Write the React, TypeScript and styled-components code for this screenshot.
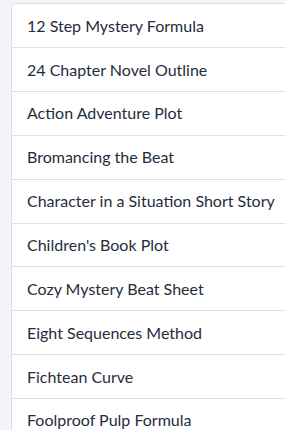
import React from "react";
import styled, { createGlobalStyle } from "styled-components";

const Global = createGlobalStyle`
  html, body { margin: 0; padding: 0; background: #f3f5f8; overflow: hidden; }
  body { font-family: Lato, "Open Sans", sans-serif; }
`;

const Page = styled.div`
  padding: 3px 0 0 11px;
  width: 285px;
  height: 430px;
  box-sizing: border-box;
  overflow: hidden;
`;

const List = styled.ul`
  list-style: none;
  margin: 0;
  padding: 0;
  width: 300px;
  background: #fff;
  border: 1px solid #dcdfe3;
  border-radius: 4px;
`;

const Item = styled.li`
  height: 43.86px;
  box-sizing: border-box;
  display: flex;
  align-items: center;
  padding: 0 15px 1px;
  font-size: 16px;
  color: #1f2d3d;
  border-top: 1px solid #dcdfe3;
  white-space: nowrap;
  &:first-child { border-top: none; height: 43.2px; }
`;

const items = [
  "12 Step Mystery Formula",
  "24 Chapter Novel Outline",
  "Action Adventure Plot",
  "Bromancing the Beat",
  "Character in a Situation Short Story",
  "Children's Book Plot",
  "Cozy Mystery Beat Sheet",
  "Eight Sequences Method",
  "Fichtean Curve",
  "Foolproof Pulp Formula",
];

export default function App() {
  return (
    <>
      <Global />
      <Page>
        <List>
          {items.map((t) => (
            <Item key={t}>{t}</Item>
          ))}
        </List>
      </Page>
    </>
  );
}
